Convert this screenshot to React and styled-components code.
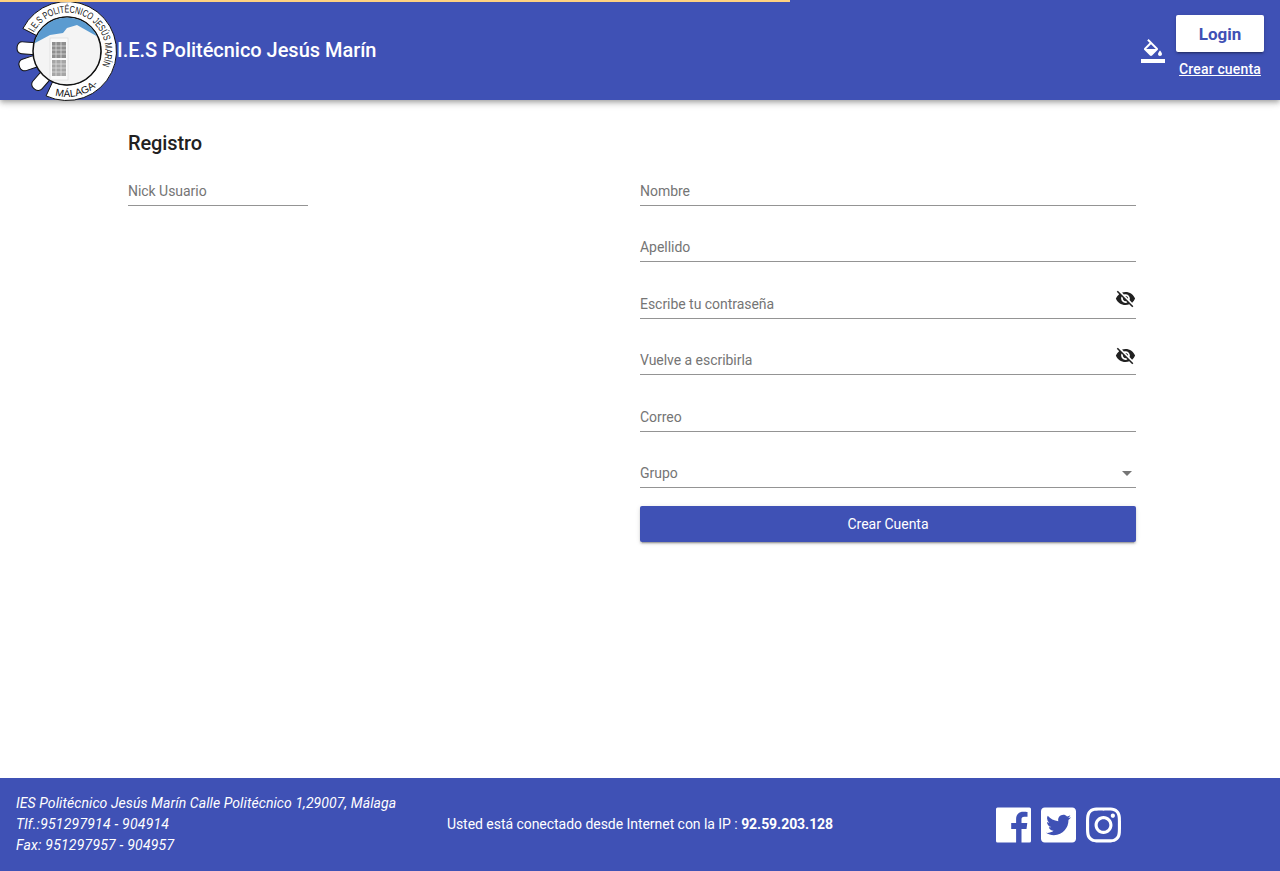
import styled, { createGlobalStyle } from "styled-components";
import { MdVisibilityOff } from "react-icons/md";
import { FaTwitterSquare, FaInstagram } from "react-icons/fa";

const GlobalStyle = createGlobalStyle`
  html, body { margin: 0; padding: 0; background: #fff; }
  body { font-family: Roboto, "Liberation Sans", sans-serif; font-size: 14px; color: #212121; }
`;

const Page = styled.div`
  min-height: 871px;
  display: flex;
  flex-direction: column;
`;

const Header = styled.header`
  position: relative;
  height: 100px;
  flex: none;
  display: flex;
  align-items: center;
  padding: 0 16px;
  background: #3f51b5;
  color: #fff;
  box-shadow: 0 2px 4px -1px rgba(0, 0, 0, 0.2), 0 4px 5px 0 rgba(0, 0, 0, 0.14), 0 1px 10px 0 rgba(0, 0, 0, 0.12);
`;

const Progress = styled.div`
  position: absolute;
  top: 0;
  left: 0;
  height: 2px;
  background: #ffd180;
`;

const Logo = styled.svg`
  width: 100px;
  height: 100px;
  flex: none;
  overflow: visible;
`;

const Title = styled.div`
  margin-left: 1px;
  font-size: 20px;
  font-weight: 500;
  letter-spacing: -0.03px;
  flex: 1;
`;

const ThemeBtn = styled.div`
  display: flex;
  margin-right: 11px;
  padding-top: 2px;
  svg { width: 24px; height: 24px; }
`;

const Account = styled.div`
  display: flex;
  flex-direction: column;
  align-items: center;
  width: 88px;
  margin-top: -7px;
`;

const LoginBtn = styled.button`
  width: 88px;
  height: 37px;
  border: 0;
  border-radius: 2px;
  background: #fff;
  color: #3f51b5;
  font: 700 17px Roboto, sans-serif;
  box-shadow: 0 3px 1px -2px rgba(0, 0, 0, 0.2), 0 2px 2px 0 rgba(0, 0, 0, 0.14), 0 1px 5px 0 rgba(0, 0, 0, 0.12);
`;

const SignLink = styled.a`
  margin-top: 8px;
  color: #fff;
  font-size: 14px;
  font-weight: 500;
  line-height: 18px;
  letter-spacing: 0.15px;
  text-decoration: underline;
  white-space: nowrap;
`;

const Main = styled.main`
  flex: 1;
  padding: 31px 144px 0 128px;
`;

const Heading = styled.h2`
  margin: 0;
  font-size: 20px;
  font-weight: 500;
  line-height: 24px;
  letter-spacing: -0.1px;
`;

const FormGrid = styled.div`
  display: grid;
  grid-template-columns: 512px 496px;
  margin-top: 18.6px;
`;

const LeftCol = styled.div`
  width: 180px;
`;

const RightCol = styled.div`
  display: flex;
  flex-direction: column;
`;

const FieldStack = styled.div`
  display: flex;
  flex-direction: column;
  gap: 24.5px;
`;

const Field = styled.div`
  position: relative;
  height: 32px;
  padding-top: 3px;
  display: flex;
  align-items: center;
  justify-content: space-between;
  box-sizing: border-box;
  border-bottom: 1px solid #949494;
  color: #757575;
  font-size: 14px;
  letter-spacing: -0.04px;
`;

const EyeBtn = styled.span`
  position: absolute;
  right: 0;
  top: 1.5px;
  display: flex;
  color: #212121;
  font-size: 21px;
`;

const Arrow = styled.span`
  width: 0;
  height: 0;
  margin: 0 4px 0 0;
  border-left: 5px solid transparent;
  border-right: 5px solid transparent;
  border-top: 5px solid #757575;
`;

const SubmitBtn = styled.button`
  height: 36px;
  margin-top: 18px;
  border: 0;
  border-radius: 2px;
  background: #3f51b5;
  color: #fff;
  font: 400 14px Roboto, sans-serif;
  box-shadow: 0 3px 1px -2px rgba(0, 0, 0, 0.2), 0 2px 2px 0 rgba(0, 0, 0, 0.14), 0 1px 5px 0 rgba(0, 0, 0, 0.12);
`;

const Footer = styled.footer`
  height: 93px;
  flex: none;
  display: grid;
  grid-template-columns: 1fr 1fr 1fr;
  align-items: center;
  padding: 0 16px;
  background: #3f51b5;
  color: #fff;
`;

const Address = styled.div`
  font-style: italic;
  line-height: 21px;
  letter-spacing: 0.085px;
  white-space: nowrap;
`;

const PhoneLine = styled.div`
  letter-spacing: 0.22px;
`;

const Connection = styled.div`
  text-align: center;
  white-space: nowrap;
  letter-spacing: -0.04px;
  margin-top: -1px;
  b { font-weight: 700; }
`;

const Social = styled.div`
  display: flex;
  justify-content: center;
  align-items: center;
  gap: 10px;
  padding-left: 5px;
  svg { width: 35px; height: 40px; }
`;

const FillIcon = () => (
  <svg viewBox="0 0 24 24" fill="currentColor">
    <path d="M16.56 8.94L7.62 0 6.21 1.41l2.38 2.38-5.15 5.15c-.59.59-.59 1.54 0 2.12l5.5 5.5c.29.29.68.44 1.06.44s.77-.15 1.06-.44l5.5-5.5c.59-.58.59-1.53 0-2.12zM5.21 10L10 5.21 14.79 10H5.21zM19 11.5s-2 2.17-2 3.5c0 1.1.9 2 2 2s2-.9 2-2c0-1.33-2-3.5-2-3.5z" />
    <path d="M0 20h24v4H0z" />
  </svg>
);

const FacebookIcon = () => (
  <svg viewBox="0 0 35 40" fill="currentColor">
    <path d="M1.5 2.5h32a1.5 1.5 0 0 1 1.5 1.5v32a1.5 1.5 0 0 1-1.5 1.5H25.500V24h5l.8-6h-5.800v-3.400c0-1.800.6-2.800 2.900-2.800h3.100V7c-.7-.1-2.300-.2-4.200-.2-4.300 0-7.200 2.600-7.200 7.300V18h-4.900v6h4.900v13.500H1.500A1.500 1.500 0 0 1 0 36V4a1.500 1.500 0 0 1 1.500-1.500z" />
  </svg>
);

const Tooth = ({ angle }) => (
  <rect
    x="-6"
    y="-50"
    width="12"
    height="20"
    rx="5"
    fill="#fff"
    stroke="#111"
    strokeWidth="1"
    transform={`translate(51 51) rotate(${angle + 90})`}
  />
);

const LogoMark = () => (
  <Logo viewBox="0 0 100 100">
    <defs>
      <path id="arcTop" d="M17.800 32.600 A38 38 0 1 1 82.100 72.800" fill="none" />
      <path id="arcBottom" d="M39.100 95.400 A46 46 0 0 0 83.500 83.500" fill="none" />
      <clipPath id="disc">
        <circle cx="51" cy="51" r="33.500" />
      </clipPath>
    </defs>
    {[184, 162, 131].map((a) => (
      <Tooth key={a} angle={a} />
    ))}
    <path
      d="M6.900 28.500 A49.500 49.500 0 1 1 30.100 95.900 L36.600 81.800 A34 34 0 1 0 20.700 35.600 Z"
      fill="#fff"
      stroke="#111"
      strokeWidth="1"
      strokeLinejoin="round"
    />
    <circle cx="51" cy="51" r="34" fill="#f4f4f4" stroke="#111" strokeWidth="1.500" />
    <g clipPath="url(#disc)">
      <path d="M10 10H92V38H84L61 25L51 28L47 33L34 35L19 43H10Z" fill="#5b9bd0" />
      <rect x="34" y="38" width="18" height="42" fill="#fafafa" stroke="#d0d0d0" strokeWidth="0.500" />
      <rect x="36" y="42" width="14" height="16" fill="#8f8f8f" />
      <rect x="36" y="60" width="14" height="16" fill="#a6a6a6" />
      <path
        d="M36 46H50M36 50H50M36 54H50M40 42V58M45 42V58M36 64H50M36 68H50M36 72H50M40 60V76M45 60V76"
        stroke="#e4e4e4"
        strokeWidth="0.700"
      />
    </g>
    <text fontFamily="Liberation Sans, sans-serif" fontSize="10" fill="#111">
      <textPath href="#arcTop" textLength="116" lengthAdjust="spacingAndGlyphs">
        I.E.S POLITÉCNICO JESÚS MARÍN
      </textPath>
    </text>
    <text fontFamily="Liberation Sans, sans-serif" fontSize="10" fill="#111">
      <textPath href="#arcBottom" textLength="46" lengthAdjust="spacingAndGlyphs">
        MÁLAGA-
      </textPath>
    </text>
  </Logo>
);

const rightFields = ["Nombre", "Apellido", "Escribe tu contraseña", "Vuelve a escribirla", "Correo"];

const App = () => (
  <Page>
    <GlobalStyle />
    <Header>
      <Progress style={{ width: "790px" }} />
      <LogoMark />
      <Title>I.E.S Politécnico Jesús Marín</Title>
      <ThemeBtn>
        <FillIcon />
      </ThemeBtn>
      <Account>
        <LoginBtn>Login</LoginBtn>
        <SignLink>Crear cuenta</SignLink>
      </Account>
    </Header>
    <Main>
      <Heading>Registro</Heading>
      <FormGrid>
        <LeftCol>
          <Field>Nick Usuario</Field>
        </LeftCol>
        <RightCol>
          <FieldStack>
            {rightFields.map((label) => (
              <Field key={label}>
                {label}
                {label.includes("scrib") && (
                  <EyeBtn>
                    <MdVisibilityOff />
                  </EyeBtn>
                )}
              </Field>
            ))}
            <Field>
              Grupo
              <Arrow />
            </Field>
          </FieldStack>
          <SubmitBtn>Crear Cuenta</SubmitBtn>
        </RightCol>
      </FormGrid>
    </Main>
    <Footer>
      <Address>
        IES Politécnico Jesús Marín Calle Politécnico 1,29007, Málaga
        <PhoneLine>Tlf.:951297914 - 904914</PhoneLine>
        <PhoneLine>Fax: 951297957 - 904957</PhoneLine>
      </Address>
      <Connection>
        Usted está conectado desde Internet con la IP : <b>92.59.203.128</b>
      </Connection>
      <Social>
        <FacebookIcon />
        <FaTwitterSquare />
        <FaInstagram />
      </Social>
    </Footer>
  </Page>
);

export default App;
